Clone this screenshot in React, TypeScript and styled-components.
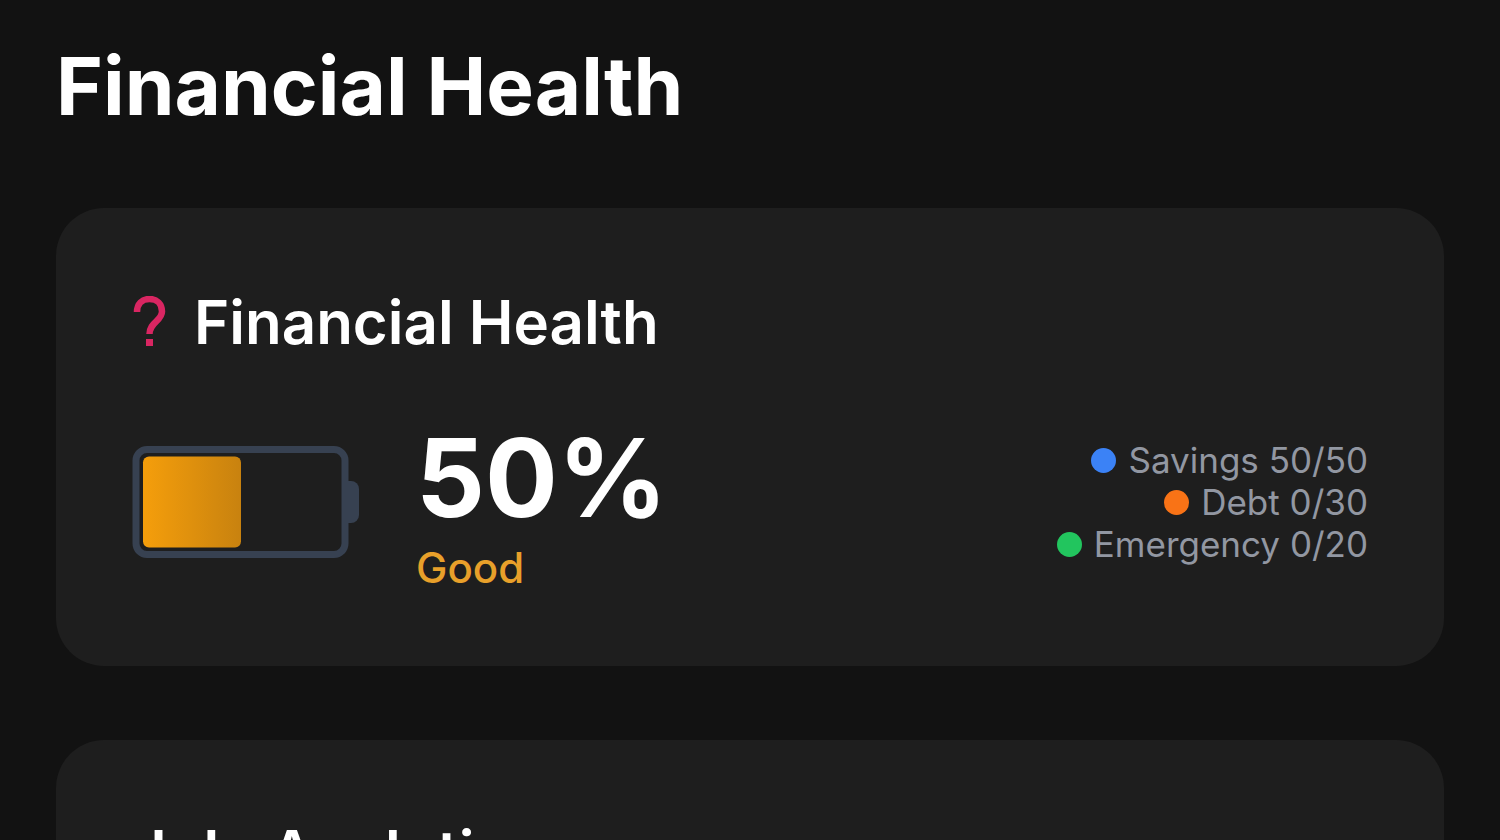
import React from "react";
import styled, { createGlobalStyle } from "styled-components";

const GlobalStyle = createGlobalStyle`
  * { box-sizing: border-box; }
  body {
    margin: 0;
    background: #121212;
    color: #fff;
    font-family: Inter, "Liberation Sans", sans-serif;
    overflow: hidden;
  }
`;

const Page = styled.main`
  height: 100vh;
  overflow: hidden;
  padding: 36px 56px 0;
`;

const PageTitle = styled.h1`
  margin: 0 0 72px;
  font-size: 80px;
  line-height: 100px;
  font-weight: 700;
`;

const Card = styled.section`
  background: #1e1e1e;
  border-radius: 48px;
  padding: 74px 76px;
  margin-bottom: 74px;
`;

const CardHeader = styled.header`
  display: flex;
  align-items: center;
  gap: 28px;
  height: 80px;
`;

const CardTitle = styled.h2`
  margin: 0;
  font-size: 60px;
  line-height: 76px;
  font-weight: 600;
`;

const HealthRow = styled.div`
  display: flex;
  align-items: center;
  margin-top: 50px;
`;

const Score = styled.div`
  margin-left: 56px;
`;

const Percent = styled.div`
  font-size: 108px;
  line-height: 132px;
  font-weight: 700;
`;

const Status = styled.div`
  font-size: 42px;
  line-height: 48px;
  font-weight: 500;
  color: #e8a02a;
`;

const Legend = styled.ul`
  list-style: none;
  margin: 0 0 0 auto;
  padding: 0;
`;

const LegendItem = styled.li`
  display: flex;
  align-items: center;
  justify-content: flex-end;
  gap: 12px;
  font-size: 35px;
  line-height: 42px;
  color: #9297a2;
`;

const Dot = styled.span<{ $color: string }>`
  width: 25px;
  height: 25px;
  border-radius: 50%;
  background: ${(p) => p.$color};
`;

const scores = [
  { label: "Savings", value: "50/50", color: "#3b82f6" },
  { label: "Debt", value: "0/30", color: "#f97316" },
  { label: "Emergency", value: "0/20", color: "#22c55e" },
];

const QuestionIcon = () => (
  <svg width="34" height="52" viewBox="0 0 34 52" fill="none" aria-hidden="true">
    <path
      d="M5 16C5 8 10 3 17.500 3S30 8 30 15.500C30 25 17.500 26 17.500 38"
      stroke="#d92662"
      strokeWidth="6.500"
    />
    <rect x="14" y="43" width="7" height="7" fill="#d92662" />
  </svg>
);

const Battery = () => (
  <svg width="228" height="112" viewBox="0 0 228 112" role="img" aria-label="Battery at 50 percent">
    <defs>
      <linearGradient id="charge" x1="0" x2="1" y1="0" y2="0">
        <stop offset="0" stopColor="#f59e0b" />
        <stop offset="1" stopColor="#c8820f" />
      </linearGradient>
    </defs>
    <rect x="4" y="3.500" width="209" height="105" rx="11" fill="none" stroke="#374151" strokeWidth="7" />
    <path d="M216 35H219A8 8 0 0 1 227 43V69A8 8 0 0 1 219 77H216Z" fill="#374151" />
    <rect x="11" y="10.500" width="98" height="91" rx="6" fill="url(#charge)" />
  </svg>
);

export default function App() {
  return (
    <>
      <GlobalStyle />
      <Page>
        <PageTitle>Financial Health</PageTitle>
        <Card>
          <CardHeader>
            <QuestionIcon />
            <CardTitle>Financial Health</CardTitle>
          </CardHeader>
          <HealthRow>
            <Battery />
            <Score>
              <Percent>50%</Percent>
              <Status>Good</Status>
            </Score>
            <Legend>
              {scores.map((s) => (
                <LegendItem key={s.label}>
                  <Dot $color={s.color} />
                  {s.label} {s.value}
                </LegendItem>
              ))}
            </Legend>
          </HealthRow>
        </Card>
        <Card>
          <CardTitle>July Analytics</CardTitle>
        </Card>
      </Page>
    </>
  );
}
